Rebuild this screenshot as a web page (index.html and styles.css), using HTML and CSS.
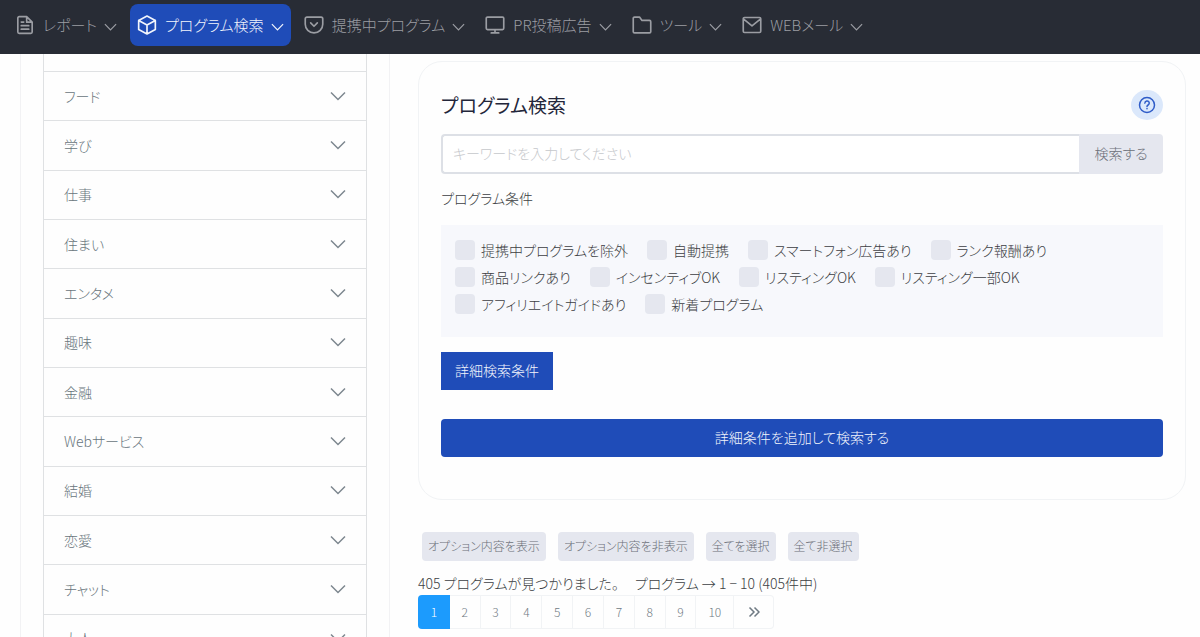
FILE: index.html
```html
<!DOCTYPE html>
<html lang="ja">
<head>
<meta charset="utf-8">
<meta name="viewport" content="width=device-width, initial-scale=1">
<title>プログラム検索</title>
<link rel="stylesheet" href="styles.css">
</head>
<body>
<svg class="defs" width="0" height="0" aria-hidden="true">
  <symbol id="chev" viewBox="0 0 16 10"><path d="M1 1.500l7 7 7-7"/></symbol>
</svg>
<header class="topbar">
  <nav class="nav">
    <a class="nav-item" href="#"><svg class="nav-icon" viewBox="0 0 24 24"><path d="M14 2H5a1.600 1.600 0 0 0-1.600 1.600v16.800A1.600 1.600 0 0 0 5 22h14a1.600 1.600 0 0 0 1.600-1.600V8.600zM14 2v6.600h6.600M7.500 8.500h3M7.500 12.800h9M7.500 17h9"/></svg><span>レポート</span><svg class="nav-chev"><use href="#chev"/></svg></a>
    <a class="nav-item active" href="#"><svg class="nav-icon" viewBox="0 0 24 24"><path d="M12 1.200l10 5.300v11L12 22.800 2 17.500v-11zM2 6.500L12 12l10-5.500M12 12v10.800"/></svg><span>プログラム検索</span><svg class="nav-chev"><use href="#chev"/></svg></a>
    <a class="nav-item" href="#"><svg class="nav-icon" viewBox="0 0 24 24"><path d="M3.500 2.500h17a2 2 0 0 1 2 2V11a10.500 10.500 0 0 1-21 0V4.500a2 2 0 0 1 2-2zM8 9.500l4 4 4-4"/></svg><span>提携中プログラム</span><svg class="nav-chev"><use href="#chev"/></svg></a>
    <a class="nav-item" href="#"><svg class="nav-icon" viewBox="0 0 24 24"><path d="M3 2.500h18a1.500 1.500 0 0 1 1.500 1.500v12a1.500 1.500 0 0 1-1.500 1.500H3A1.500 1.500 0 0 1 1.500 16V4A1.500 1.500 0 0 1 3 2.500zM12 17.500v4M7.500 21.500h9"/></svg><span>PR投稿広告</span><svg class="nav-chev"><use href="#chev"/></svg></a>
    <a class="nav-item" href="#"><svg class="nav-icon" viewBox="0 0 24 24"><path d="M3 2.500h6l3 4h9A1.500 1.500 0 0 1 22.500 8v12a1.500 1.500 0 0 1-1.500 1.500H3A1.500 1.500 0 0 1 1.500 20V4A1.500 1.500 0 0 1 3 2.500z"/></svg><span>ツール</span><svg class="nav-chev"><use href="#chev"/></svg></a>
    <a class="nav-item" href="#"><svg class="nav-icon" viewBox="0 0 24 24"><path d="M3 3h18a1.500 1.500 0 0 1 1.500 1.500v15A1.500 1.500 0 0 1 21 21H3a1.500 1.500 0 0 1-1.500-1.500v-15A1.500 1.500 0 0 1 3 3zM2 5l10 8 10-8"/></svg><span>WEBメール</span><svg class="nav-chev"><use href="#chev"/></svg></a>
  </nav>
</header>
<div class="page">
  <aside class="sidebar">
    <ul class="categories">
      <li class="stub"></li>
      <li><button type="button">フード<svg><use href="#chev"/></svg></button></li>
      <li><button type="button">学び<svg><use href="#chev"/></svg></button></li>
      <li><button type="button">仕事<svg><use href="#chev"/></svg></button></li>
      <li><button type="button">住まい<svg><use href="#chev"/></svg></button></li>
      <li><button type="button">エンタメ<svg><use href="#chev"/></svg></button></li>
      <li><button type="button">趣味<svg><use href="#chev"/></svg></button></li>
      <li><button type="button">金融<svg><use href="#chev"/></svg></button></li>
      <li><button type="button">Webサービス<svg><use href="#chev"/></svg></button></li>
      <li><button type="button">結婚<svg><use href="#chev"/></svg></button></li>
      <li><button type="button">恋愛<svg><use href="#chev"/></svg></button></li>
      <li><button type="button">チャット<svg><use href="#chev"/></svg></button></li>
      <li><button type="button">大人<svg><use href="#chev"/></svg></button></li>
    </ul>
  </aside>
  <main class="main">
    <form class="panel">
      <div class="panel-head">
        <h1>プログラム検索</h1>
        <button class="help" type="button" aria-label="ヘルプ"><svg viewBox="0 0 24 24"><circle cx="12" cy="12" r="10"/><path d="M9.200 9.500a2.900 2.900 0 1 1 4.300 2.500c-1 .6-1.500 1-1.500 2M12 16.600v.4"/></svg></button>
      </div>
      <div class="search">
        <input type="text" aria-label="キーワード" placeholder="キーワードを入力してください">
        <button type="button">検索する</button>
      </div>
      <p class="cond-title">プログラム条件</p>
      <div class="conditions">
        <label><input type="checkbox">提携中プログラムを除外</label>
        <label><input type="checkbox">自動提携</label>
        <label><input type="checkbox">スマートフォン広告あり</label>
        <label><input type="checkbox">ランク報酬あり</label>
        <label><input type="checkbox">商品リンクあり</label>
        <label><input type="checkbox">インセンティブOK</label>
        <label><input type="checkbox">リスティングOK</label>
        <label><input type="checkbox">リスティング一部OK</label>
        <label><input type="checkbox">アフィリエイトガイドあり</label>
        <label><input type="checkbox">新着プログラム</label>
      </div>
      <button class="detail" type="button">詳細検索条件</button>
      <button class="submit" type="button">詳細条件を追加して検索する</button>
    </form>
    <div class="chips">
      <button type="button">オプション内容を表示</button>
      <button type="button">オプション内容を非表示</button>
      <button type="button">全てを選択</button>
      <button type="button">全て非選択</button>
    </div>
    <p class="result"><span>405 プログラムが見つかりました。</span><span>プログラム → 1 − 10 (405件中)</span></p>
    <nav class="pager" aria-label="ページ">
      <a class="current" href="#">1</a><a href="#">2</a><a href="#">3</a><a href="#">4</a><a href="#">5</a><a href="#">6</a><a href="#">7</a><a href="#">8</a><a href="#">9</a><a class="wide" href="#">10</a><a class="wide" href="#" aria-label="次へ"><svg viewBox="0 0 12 12"><path d="M1.500 1.500L6 6l-4.500 4.500M6.500 1.500L11 6l-4.500 4.500"/></svg></a>
    </nav>
  </main>
</div>
</body>
</html>
```
FILE: styles.css
```css
* { box-sizing: border-box; }

body {
  margin: 0;
  height: 100vh;
  overflow: hidden;
  background: #fefefe;
  color: #3c3e43;
  font: 300 14px/20px "Noto Sans CJK JP", "Noto Sans", sans-serif;
  font-feature-settings: "palt";
}

button, input { font: inherit; font-feature-settings: inherit; color: inherit; }
button { border: 0; background: none; cursor: pointer; padding: 0; }
a { color: inherit; text-decoration: none; }
p, h1, ul { margin: 0; padding: 0; }
svg { fill: none; stroke: currentColor; flex: none; }
.defs { display: block; }

.topbar { background: #282c35; height: 54px; padding: 4px 8px; }
.nav { display: flex; gap: 6px; }
.nav-item {
  display: flex;
  align-items: center;
  height: 42px;
  padding: 0 7px;
  border-radius: 8px;
  color: #9b9da3;
  font-size: 15px;
  white-space: nowrap;
}
.nav-item.active { background: #1f4cb8; color: #f2f5fc; }
.nav-icon { width: 20px; height: 20px; margin-right: 8px; stroke-width: 2; stroke-linejoin: round; stroke-linecap: round; }
.nav-chev { width: 13px; height: 8px; margin-left: 7px; margin-top: 4px; stroke-width: 1.5; }

.page { display: flex; align-items: stretch; }

.sidebar {
  flex: none;
  display: flex;
  width: 370px;
  margin-left: 20px;
  padding: 0 22px;
  border: solid #f2f2f4;
  border-width: 0 1px;
}
.categories {
  flex: 1;
  display: flex;
  flex-direction: column;
  list-style: none;
  border: solid #dfe1e3;
  border-width: 0 1px;
}
.categories li { flex: 1 1 48px; display: flex; border-top: 1px solid #dfe1e3; }
.categories .stub { flex: none; height: 17px; border-top: 0; }
.categories button {
  flex: 1;
  display: flex;
  align-items: center;
  justify-content: space-between;
  padding: 0 20px 1px;
  color: #68757c;
}
.categories svg { width: 16px; height: 10px; stroke-width: 1.5; color: #7d878f; }

.main { flex: 1; min-width: 0; padding: 7px 14px 34px 28px; }

.panel {
  display: flex;
  flex-direction: column;
  padding: 28px 22px 42px;
  border: 1px solid #f1f3f5;
  border-radius: 24px;
}
.panel-head { display: flex; justify-content: space-between; align-items: center; }
.panel-head h1 { font-size: 19px; line-height: 28px; font-weight: 400; color: #23263a; }
.help {
  display: flex;
  align-items: center;
  justify-content: center;
  width: 32px;
  height: 30px;
  border-radius: 50%;
  background: #dbe8fb;
  color: #2f5cc8;
}
.help svg { width: 18px; height: 18px; stroke-width: 2; stroke-linecap: round; }

.search { display: flex; margin-top: 14px; height: 40px; }
.search input {
  flex: 1;
  min-width: 0;
  padding: 0 10px 2px;
  border: 2px solid #dde0e6;
  border-right: 0;
  border-radius: 4px 0 0 4px;
  background: #fff;
}
.search input::placeholder { color: #c6c8cc; opacity: 1; }
.search button { width: 84px; padding-bottom: 2px; border-radius: 0 4px 4px 0; background: #e5e7ef; color: #6b6f78; }

.cond-title { margin-top: 14px; }
.conditions {
  display: flex;
  flex-wrap: wrap;
  align-content: flex-start;
  gap: 7px 19px;
  margin-top: 17px;
  padding: 15px 14px 23px;
  background: #f7f8fc;
}
.conditions label { display: flex; align-items: center; gap: 6px; white-space: nowrap; }
.conditions input {
  appearance: none;
  width: 20px;
  height: 20px;
  margin: 0;
  border-radius: 4px;
  background: #e5e7ef;
}
.conditions input:checked { background: #1f4cb8; }

.detail { align-self: flex-start; margin-top: 15px; padding: 8px 14px 10px; background: #1f4cb8; color: #f2f5fc; }
.submit { margin-top: 29px; padding: 8px 14px 10px; border-radius: 4px; background: #1f4cb8; color: #f2f5fc; }

.chips { display: flex; flex-wrap: wrap; gap: 12px; margin: 32px 4px 0; }
.chips button {
  height: 29px;
  padding: 0 6px 2px;
  border-radius: 4px;
  background: #e5e7ef;
  color: #6b6f78;
  font-size: 12px;
}

.result { display: flex; gap: 16px; margin-top: 12px; }

.pager { display: flex; width: 356px; height: 34px; margin-top: 2px; color: #6f7a83; font-size: 12px; }
.pager a {
  display: flex;
  align-items: center;
  justify-content: center;
  flex: 0 1 31px;
  border: solid #f1f3f5;
  border-width: 1px 1px 1px 0;
}
.pager .current { flex-basis: 32px; border: 0; border-radius: 4px 0 0 4px; background: #1c9bfd; color: #fff; }
.pager .wide { flex-basis: 38px; }
.pager .wide:last-child { flex-basis: 40px; border-radius: 0 4px 4px 0; }
.pager svg { width: 12px; height: 12px; stroke-width: 1.5; }
```
